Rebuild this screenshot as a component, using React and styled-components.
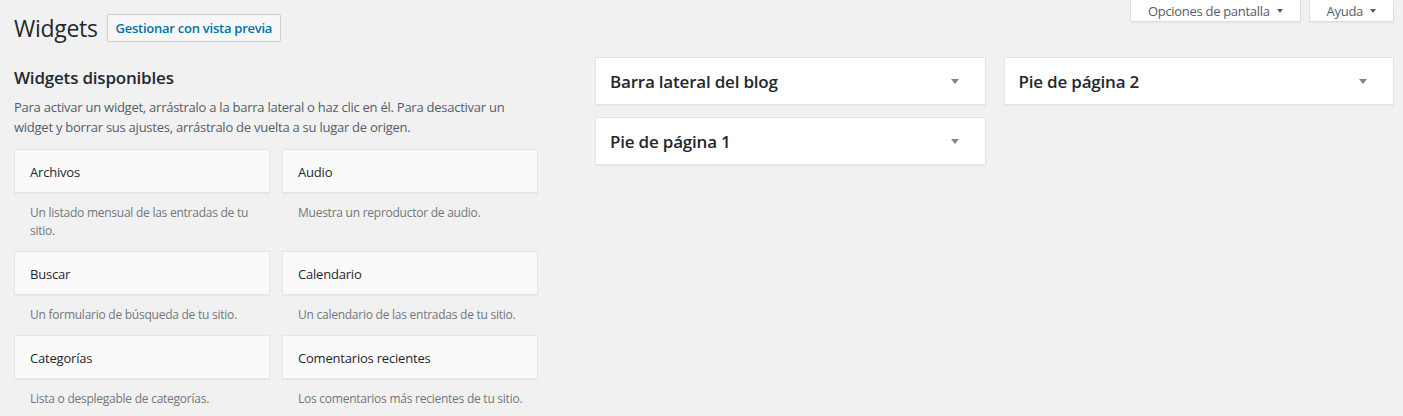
import React from "react";
import styled, { createGlobalStyle } from "styled-components";

const GlobalStyle = createGlobalStyle`
  html, body {
    margin: 0;
    padding: 0;
    background: #f1f1f1;
  }
  body {
    font-family: "Segoe UI", "Open Sans", "Noto Sans", sans-serif;
    font-size: 13px;
    color: #23282d;
  }
`;

const Page = styled.div`
  padding: 0 9px 20px 14px;
`;

const Header = styled.div`
  display: flex;
  justify-content: space-between;
  align-items: flex-start;
`;

const TitleGroup = styled.div`
  display: flex;
  align-items: center;
  gap: 9px;
  padding-top: 14px;
`;

const Title = styled.h1`
  margin: 0;
  font-size: 23px;
  font-weight: 400;
  line-height: 28px;
  color: #23282d;
  letter-spacing: -0.3px;
`;

const ActionButton = styled.a`
  display: inline-block;
  box-sizing: border-box;
  height: 28px;
  line-height: 26px;
  padding: 0 8px;
  border: 1px solid #ccc;
  border-radius: 2px;
  background: #f7f7f7;
  color: #0073aa;
  font-size: 13px;
  font-weight: 600;
  letter-spacing: -0.25px;
  text-decoration: none;
`;

const Tabs = styled.div`
  display: flex;
  gap: 8px;
  margin-right: 0;
`;

const Tab = styled.button`
  display: flex;
  align-items: center;
  gap: 7px;
  height: 22px;
  padding: 0 17px 0 17px;
  border: 1px solid #ddd;
  border-top: none;
  background: #fff;
  color: #555d66;
  font-family: inherit;
  font-size: 13px;
  letter-spacing: -0.3px;
  box-shadow: 0 1px 1px rgba(0, 0, 0, 0.04);
  cursor: pointer;
`;

const Caret = styled.span`
  width: 0;
  height: 0;
  border-left: ${(p) => p.$size}px solid transparent;
  border-right: ${(p) => p.$size}px solid transparent;
  border-top: ${(p) => p.$size + 1}px solid ${(p) => p.$color};
`;

const Main = styled.div`
  display: flex;
  align-items: flex-start;
  margin-top: 15px;
`;

const Available = styled.div`
  width: 525px;
  flex-shrink: 0;
  margin-right: 56px;
`;

const SectionTitle = styled.h2`
  margin: 10px 0 0;
  font-size: 17px;
  line-height: 22px;
  font-weight: 600;
  color: #23282d;
  letter-spacing: -0.2px;
`;

const Intro = styled.p`
  margin: 8px 0 12px;
  font-size: 13px;
  line-height: 20px;
  color: #555d66;
  letter-spacing: -0.25px;
`;

const WidgetGrid = styled.div`
  display: grid;
  grid-template-columns: 256px 256px;
  column-gap: 12px;
`;

const WidgetItem = styled.div``;

const WidgetTop = styled.div`
  box-sizing: border-box;
  height: 44px;
  padding: 1px 15px 0;
  display: flex;
  align-items: center;
  background: #fafafa;
  border: 1px solid #e5e5e5;
  box-shadow: 0 1px 1px rgba(0, 0, 0, 0.04);
  font-size: 13px;
  color: #23282d;
  letter-spacing: -0.2px;
`;

const WidgetDesc = styled.div`
  padding: 11px 15px 11px 16px;
  font-size: 12px;
  line-height: 18px;
  color: #72777c;
  letter-spacing: -0.25px;
`;

const Sidebars = styled.div`
  flex: 1;
  display: grid;
  grid-template-columns: 1fr 1fr;
  column-gap: 18px;
  align-items: start;
`;

const SidebarColumn = styled.div`
  display: flex;
  flex-direction: column;
  gap: 12px;
`;

const SidebarBox = styled.div`
  box-sizing: border-box;
  height: 48px;
  display: flex;
  align-items: center;
  justify-content: space-between;
  padding: 0 26px 0 14px;
  background: #fff;
  border: 1px solid #e5e5e5;
  box-shadow: 0 1px 1px rgba(0, 0, 0, 0.04);
`;

const SidebarName = styled.h2`
  margin: 0;
  font-size: 17px;
  font-weight: 600;
  color: #23282d;
  letter-spacing: -0.2px;
`;

const widgets = [
  { name: "Archivos", desc: "Un listado mensual de las entradas de tu sitio." },
  { name: "Audio", desc: "Muestra un reproductor de audio." },
  { name: "Buscar", desc: "Un formulario de búsqueda de tu sitio." },
  { name: "Calendario", desc: "Un calendario de las entradas de tu sitio." },
  { name: "Categorías", desc: "Lista o desplegable de categorías." },
  { name: "Comentarios recientes", desc: "Los comentarios más recientes de tu sitio." },
];

const sidebarColumns = [
  ["Barra lateral del blog", "Pie de página 1"],
  ["Pie de página 2"],
];

export default function App() {
  return (
    <Page>
      <GlobalStyle />
      <Header>
        <TitleGroup>
          <Title>Widgets</Title>
          <ActionButton href="#">Gestionar con vista previa</ActionButton>
        </TitleGroup>
        <Tabs>
          <Tab>
            Opciones de pantalla <Caret $size={3.5} $color="#555d66" />
          </Tab>
          <Tab>
            Ayuda <Caret $size={3.5} $color="#555d66" />
          </Tab>
        </Tabs>
      </Header>
      <Main>
        <Available>
          <SectionTitle>Widgets disponibles</SectionTitle>
          <Intro>
            Para activar un widget, arrástralo a la barra lateral o haz clic en él. Para desactivar un
            widget y borrar sus ajustes, arrástralo de vuelta a su lugar de origen.
          </Intro>
          <WidgetGrid>
            {widgets.map((w) => (
              <WidgetItem key={w.name}>
                <WidgetTop>{w.name}</WidgetTop>
                <WidgetDesc>{w.desc}</WidgetDesc>
              </WidgetItem>
            ))}
          </WidgetGrid>
        </Available>
        <Sidebars>
          {sidebarColumns.map((col, i) => (
            <SidebarColumn key={i}>
              {col.map((name) => (
                <SidebarBox key={name}>
                  <SidebarName>{name}</SidebarName>
                  <Caret $size={4.5} $color="#82878c" />
                </SidebarBox>
              ))}
            </SidebarColumn>
          ))}
        </Sidebars>
      </Main>
    </Page>
  );
}
